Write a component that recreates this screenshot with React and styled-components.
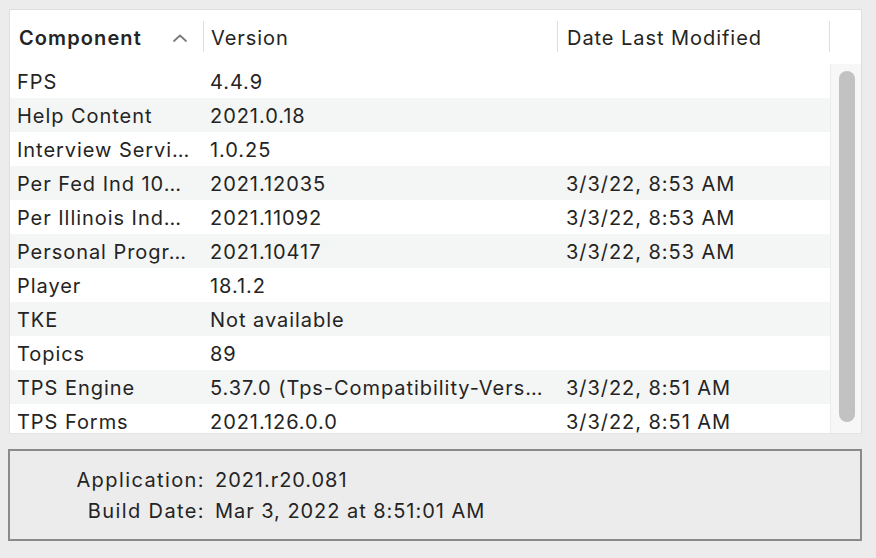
import React from "react";
import styled, { createGlobalStyle } from "styled-components";

const Global = createGlobalStyle`
  html, body { margin: 0; padding: 0; background: #ececec; }
  body {
    font-family: "Inter", "Liberation Sans", sans-serif;
    color: #242424;
    letter-spacing: 0.95px;
  }
`;

const Page = styled.div`
  width: 876px;
  height: 558px;
  box-sizing: border-box;
  padding: 9px 14px 0 8px;
  display: flex;
  flex-direction: column;
`;

const TableBox = styled.div`
  margin-left: 1px;
  height: 425px;
  box-sizing: border-box;
  border: 1px solid #dedede;
  border-bottom-color: #e4e4e4;
  background: #fff;
  display: flex;
  flex-direction: column;
  overflow: hidden;
`;

const Header = styled.div`
  display: flex;
  align-items: center;
  height: 54px;
  flex: none;
`;

const HeaderCells = styled.div`
  display: flex;
  align-items: center;
  width: 820px;
  height: 54px;
  border-bottom: 1px solid #e2e2e2;
`;

const HeadCell = styled.div`
  width: ${(p) => p.$w}px;
  box-sizing: border-box;
  padding: 3px 15px 0 ${(p) => p.$pl}px;
  font-size: 20px;
  font-weight: ${(p) => (p.$bold ? 600 : 400)};
  letter-spacing: ${(p) => (p.$bold ? "1.1px" : "0.95px")};
  display: flex;
  align-items: center;
  justify-content: space-between;
  white-space: nowrap;
`;

const Divider = styled.div`
  width: 1px;
  height: 31px;
  background: #dedede;
  flex: none;
`;

const Corner = styled.div`
  flex: 1;
  height: 55px;
`;

const Body = styled.div`
  display: flex;
  flex: 1;
  min-height: 0;
`;

const Rows = styled.div`
  width: 820px;
  overflow: hidden;
`;

const Row = styled.div`
  display: flex;
  align-items: center;
  height: 34px;
  box-sizing: border-box;
  padding-top: 2px;
  background: ${(p) => (p.$alt ? "#f4f5f5" : "#ffffff")};
  font-size: 20px;
  white-space: nowrap;
`;

const Cell = styled.div`
  width: ${(p) => p.$w}px;
  box-sizing: border-box;
  padding-left: ${(p) => p.$pl}px;
  overflow: hidden;
`;

const Track = styled.div`
  flex: 1;
  background: #f7f7f7;
  border-left: 1px solid #ececec;
  display: flex;
  justify-content: center;
  padding: 7px 0 11px 0;
  box-sizing: border-box;
`;

const Thumb = styled.div`
  width: 16px;
  height: 100%;
  border-radius: 8px;
  background: #c2c2c2;
  margin-left: 1px;
`;

const InfoBox = styled.div`
  margin-top: 15px;
  height: 92px;
  box-sizing: border-box;
  border: 2px solid #8a8a8a;
  display: grid;
  grid-template-columns: 195px 1fr;
  column-gap: 10px;
  row-gap: 7px;
  align-content: center;
  font-size: 20px;
`;

const Label = styled.div`
  text-align: right;
  letter-spacing: 1.4px;
`;

const Value = styled.div``;

const Chevron = () => (
  <svg width="16" height="10" viewBox="0 0 16 10">
    <path d="M2 8 L8 2.5 L14 8" fill="none" stroke="#7a7a7a" strokeWidth="1.8" strokeLinecap="round" strokeLinejoin="round" />
  </svg>
);

const data = [
  ["FPS", "4.4.9", ""],
  ["Help Content", "2021.0.18", ""],
  ["Interview Servi…", "1.0.25", ""],
  ["Per Fed Ind 10…", "2021.12035", "3/3/22, 8:53 AM"],
  ["Per Illinois Ind…", "2021.11092", "3/3/22, 8:53 AM"],
  ["Personal Progr…", "2021.10417", "3/3/22, 8:53 AM"],
  ["Player", "18.1.2", ""],
  ["TKE", "Not available", ""],
  ["Topics", "89", ""],
  ["TPS Engine", "5.37.0 (Tps-Compatibility-Vers…", "3/3/22, 8:51 AM"],
  ["TPS Forms", "2021.126.0.0", "3/3/22, 8:51 AM"],
];

export default function App() {
  return (
    <>
      <Global />
      <Page>
        <TableBox>
          <Header>
            <HeaderCells>
              <HeadCell $w={193} $pl={9} $bold>
                Component
                <Chevron />
              </HeadCell>
              <Divider />
              <HeadCell $w={353} $pl={7}>Version</HeadCell>
              <Divider />
              <HeadCell $w={271} $pl={9}>Date Last Modified</HeadCell>
              <Divider />
            </HeaderCells>
            <Corner />
          </Header>
          <Body>
            <Rows>
              {data.map((r, i) => (
                <Row key={i} $alt={i % 2 === 1}>
                  <Cell $w={193} $pl={7}>{r[0]}</Cell>
                  <Cell $w={354} $pl={7}>{r[1]}</Cell>
                  <Cell $w={273} $pl={9}>{r[2]}</Cell>
                </Row>
              ))}
            </Rows>
            <Track>
              <Thumb />
            </Track>
          </Body>
        </TableBox>
        <InfoBox>
          <Label>Application:</Label>
          <Value>2021.r20.081</Value>
          <Label>Build Date:</Label>
          <Value>Mar 3, 2022 at 8:51:01 AM</Value>
        </InfoBox>
      </Page>
    </>
  );
}
